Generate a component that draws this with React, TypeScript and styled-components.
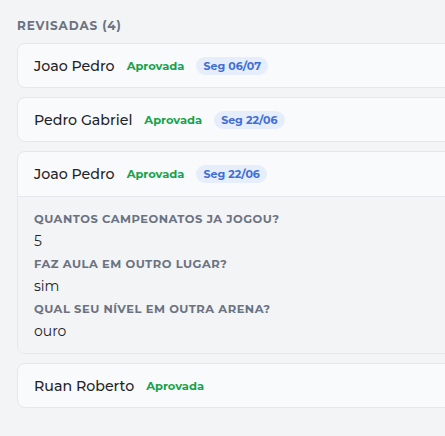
import { FC } from 'react'
import styled, { createGlobalStyle } from 'styled-components'

const GlobalStyle = createGlobalStyle`
    html, body {
        margin: 0;
        padding: 0;
        background: #f3f4f6;
        overflow: hidden;
    }
    body {
        font-family: Montserrat, Inter, 'Noto Sans', sans-serif;
    }
`

const Wrapper = styled.div`
    width: 480px;
    padding: 18px 0 28px 17px;
    box-sizing: border-box;
`

const Title = styled.h3`
    margin: 0 0 9px;
    font-size: 12px;
    line-height: 16px;
    font-weight: 700;
    letter-spacing: 0.9px;
    color: #6b7280;
    text-transform: uppercase;
`

const List = styled.div`
    display: flex;
    flex-direction: column;
    gap: 9px;
`

const Card = styled.div`
    background: #f9fafb;
    border: 1px solid #e5e7eb;
    border-radius: 8px;
    overflow: hidden;
`

const CardHeader = styled.div<{ open: boolean }>`
    display: flex;
    align-items: center;
    gap: 12px;
    height: 43px;
    padding: 0 16px;
    ${({ open }) => open && `
        height: 44px;
        border-bottom: 1px solid #e5e7eb;
    `}
`

const Name = styled.span`
    font-size: 14.2px;
    font-weight: 500;
    color: #1f2328;
`

const Status = styled.span`
    font-size: 11.5px;
    font-weight: 700;
    color: #16a34a;
`

const DateBadge = styled.span`
    font-size: 11px;
    font-weight: 700;
    color: #3f6fd6;
    background: #e6edfb;
    border-radius: 10px;
    padding: 2px 7px;
    line-height: 14px;
`

const Body = styled.div`
    background: #f3f4f6;
    padding: 14px 16px 12px;
    display: flex;
    flex-direction: column;
    gap: 5px;
`

const Question = styled.div`
    display: flex;
    flex-direction: column;
    gap: 4px;
`

const Label = styled.span`
    font-size: 11.5px;
    line-height: 16px;
    font-weight: 700;
    color: #6b7280;
    text-transform: uppercase;
    letter-spacing: 0.5px;
`

const Answer = styled.span`
    font-size: 14px;
    line-height: 20px;
    color: #1f2328;
`

type Review = {
    name: string
    date?: string
    answers?: { q: string, a: string }[]
}

const reviews: Review[] = [
    { name: 'Joao Pedro', date: 'Seg 06/07' },
    { name: 'Pedro Gabriel', date: 'Seg 22/06' },
    {
        name: 'Joao Pedro',
        date: 'Seg 22/06',
        answers: [
            { q: 'Quantos campeonatos ja jogou?', a: '5' },
            { q: 'Faz aula em outro lugar?', a: 'sim' },
            { q: 'Qual seu nível em outra arena?', a: 'ouro' },
        ],
    },
    { name: 'Ruan Roberto' },
]

const App: FC = () => {
    return (
        <Wrapper>
            <GlobalStyle />
            <Title>Revisadas ({reviews.length})</Title>
            <List>
                {reviews.map((review, i) => (
                    <Card key={i}>
                        <CardHeader open={!!review.answers}>
                            <Name>{review.name}</Name>
                            <Status>Aprovada</Status>
                            {review.date && <DateBadge>{review.date}</DateBadge>}
                        </CardHeader>
                        {review.answers && (
                            <Body>
                                {review.answers.map(item => (
                                    <Question key={item.q}>
                                        <Label>{item.q}</Label>
                                        <Answer>{item.a}</Answer>
                                    </Question>
                                ))}
                            </Body>
                        )}
                    </Card>
                ))}
            </List>
        </Wrapper>
    )
}

export default App
